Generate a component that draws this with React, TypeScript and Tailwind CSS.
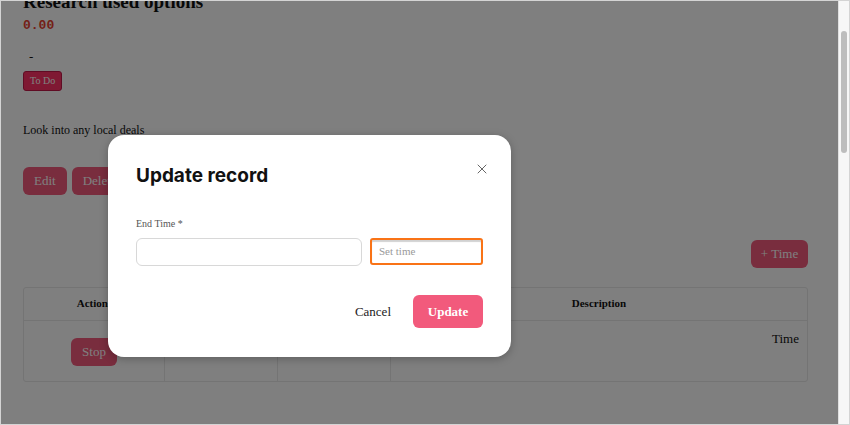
import { X } from "lucide-react";

const serif = "font-['Liberation_Serif',serif]";

export default function App() {
  return (
    <div className="flex h-[425px] w-[850px] overflow-hidden border border-[#d4d4d4] bg-white">
      <div className={`relative flex-1 overflow-hidden ${serif} text-[#111]`}>
        <div className="px-[22px]">
          <h1 className="-mt-[12px] text-[19px] font-bold leading-[26px]">Research used options</h1>
          <p className="mt-[2px] font-['Liberation_Mono',monospace] text-[13px] font-bold leading-[18px] text-[#e8402e]">0.00</p>
          <p className="mt-[15px] pl-[6px] text-[13px] leading-[14px]">-</p>
          <span className="mt-[7px] inline-block rounded-[3px] border border-[#c01848] bg-[#ff3366] px-[6px] py-[4px] text-[10px] leading-[10px] text-white">
            To Do
          </span>
          <p className="mt-[30px] text-[12px] leading-[18px]">Look into any local deals</p>
          <div className="mt-[28px] flex gap-[5px]">
            <button className="h-[28px] rounded-[6px] bg-[#f25a7c] px-[11px] text-[13px] text-white">Edit</button>
            <button className="h-[28px] rounded-[6px] bg-[#f25a7c] px-[11px] text-[13px] text-white">Delete</button>
          </div>
          <div className="mt-[45px] flex justify-end pr-[8px]">
            <button className="h-[28px] w-[57px] rounded-[6px] bg-[#f25a7c] text-[13px] text-white">+ Time</button>
          </div>
          <div className="mt-[19px] mr-[8px] overflow-hidden rounded-[3px] border border-[#e8e8e8]">
            <div className="grid h-[33px] grid-cols-[141px_113px_113px_1fr] border-b border-[#e8e8e8] text-[11px] font-bold">
              <div className="flex items-center justify-center pb-[2px]">Actions</div>
              <div className="flex items-center justify-center pb-[2px]">Start</div>
              <div className="flex items-center justify-center pb-[2px]">End</div>
              <div className="flex items-center justify-center pb-[2px]">Description</div>
            </div>
            <div className="grid h-[60px] grid-cols-[141px_113px_113px_1fr] text-[13px]">
              <div className="flex justify-center border-r border-[#e8e8e8] pt-[17px]">
                <button className="h-[28px] w-[46px] rounded-[6px] bg-[#f25a7c] text-[13px] text-white">Stop</button>
              </div>
              <div className="border-r border-[#e8e8e8]" />
              <div className="border-r border-[#e8e8e8]" />
              <div className="pt-[8px] pr-[8px] text-right">Time</div>
            </div>
          </div>
        </div>

        <div className="absolute inset-0 bg-black/50" />

        <div className="absolute top-[134px] left-[107px] flex h-[222px] w-[403px] flex-col rounded-[16px] bg-white px-[28px] shadow-[0_2px_8px_rgba(0,0,0,0.25)]">
          <div className="mt-[29px] flex items-start justify-between">
            <h2 className="font-['Inter',sans-serif] text-[19px] font-bold leading-[24px] text-[#111]">Update record</h2>
            <X className="mt-[-3px] mr-[-7px] h-[16px] w-[16px] text-[#666]" strokeWidth={1.5} />
          </div>
          <label className="mt-[30px] text-[10px] leading-[12px] text-[#555]">End Time *</label>
          <div className="mt-[8px] flex gap-[8px]">
            <div className="h-[28px] w-[226px] rounded-[6px] border border-[#d8d8d8]" />
            <div className="flex h-[27px] flex-1 items-center rounded-[3px] border-2 border-[#f97316] px-[7px] text-[11px] text-[#9a9a9a] shadow-[inset_0_2px_1px_rgba(0,0,0,0.18)]">
              Set time
            </div>
          </div>
          <div className="mt-[29px] flex items-center justify-end gap-[22px]">
            <span className="text-[13px] text-[#222]">Cancel</span>
            <button className="h-[33px] w-[70px] rounded-[6px] bg-[#f25a7c] text-[13px] font-bold text-white">Update</button>
          </div>
        </div>
      </div>
      <div className="flex w-[11px] justify-center border-l border-[#e0e0e0] bg-[#f7f7f7] pt-[30px]">
        <div className="h-[122px] w-[6px] rounded-full bg-[#bdbdbd]" />
      </div>
    </div>
  );
}
